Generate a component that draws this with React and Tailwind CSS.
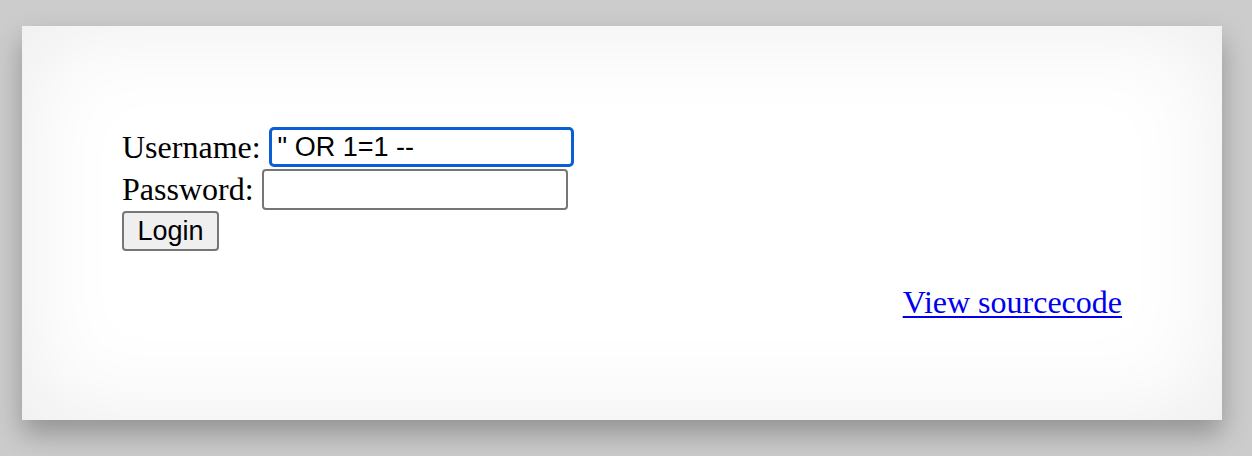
export default function App() {
  return (
    <div className="min-h-screen bg-[#cccccc] pt-[26px] pl-[22px]">
      <div
        className="w-[1200px] h-[394px] bg-white p-[100px] shadow-[0_14px_26px_rgba(0,0,0,0.28),inset_0_0_100px_rgba(0,0,0,0.08)] text-[32px] text-black"
        style={{ fontFamily: '"Liberation Serif", "Times New Roman", serif' }}
      >
        <form className="flex flex-col">
          <div className="flex items-center h-[42px]">
            <span className="leading-none">Username:</span>
            <input
              type="text"
              defaultValue='" OR 1=1 --'
              className="ml-[8px] w-[305px] h-[40px] border-[3px] border-[#0b5fd6] rounded-[5px] px-[6px] text-[27px] outline-none bg-white"
              style={{ fontFamily: '"Liberation Sans", Arial, sans-serif' }}
            />
          </div>
          <div className="flex items-center h-[42px]">
            <span className="leading-none">Password:</span>
            <input
              type="password"
              className="ml-[8px] w-[306px] h-[41px] border-2 border-[#767676] rounded-[4px] px-[4px] text-[27px] outline-none bg-white"
              style={{ fontFamily: '"Liberation Sans", Arial, sans-serif' }}
            />
          </div>
          <div className="flex items-center h-[42px]">
            <button
              type="button"
              className="w-[97px] h-[40px] bg-[#efefef] border-2 border-[#767676] rounded-[4px] text-[27px] leading-none text-black"
              style={{ fontFamily: '"Liberation Sans", Arial, sans-serif' }}
            >
              Login
            </button>
          </div>
        </form>
        <div className="flex justify-end mt-[32px]">
          <a href="#" className="text-[#0000ee] underline underline-offset-[3px] decoration-2 leading-[37px]">
            View sourcecode
          </a>
        </div>
      </div>
    </div>
  );
}
